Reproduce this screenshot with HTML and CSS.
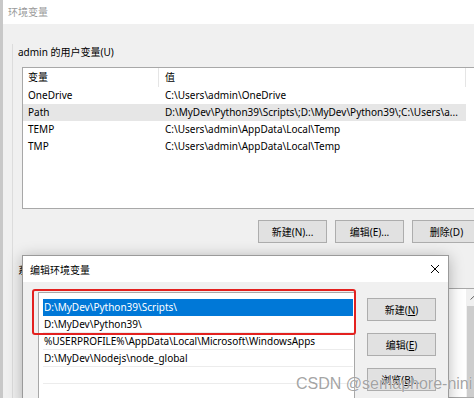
FILE: index.html
```html
<!DOCTYPE html>
<html>
  <head>
    <meta charset="utf-8">
    <title>环境变量</title>
    <link rel="stylesheet" href="styles.css">
  </head>
  <body>
    <div class="main">
      <div class="titlebar">环境变量</div>
      <div class="content">
        <div class="panel">
          <div class="label">admin 的用户变量(U)</div>

          <div class="listview">
            <div class="lv-head">
              <span class="c1">变量</span>
              <span class="c2">值</span>
            </div>
            <div class="lv-row"><span class="c1">OneDrive</span><span class="c2">C:\Users\admin\OneDrive</span></div>
            <div class="lv-row selected"><span class="c1">Path</span><span class="c2">D:\MyDev\Python39\Scripts\;D:\MyDev\Python39\;C:\Users\a...</span></div>
            <div class="lv-row"><span class="c1">TEMP</span><span class="c2">C:\Users\admin\AppData\Local\Temp</span></div>
            <div class="lv-row"><span class="c1">TMP</span><span class="c2">C:\Users\admin\AppData\Local\Temp</span></div>
          </div>

          <div class="btn-row">
            <button class="btn">新建(N)...</button>
            <button class="btn">编辑(E)...</button>
            <button class="btn">删除(D)</button>
          </div>

          <div class="label sys-label">系统变量(S)</div>
          <div class="sys-list">
            <div class="scrollbar">
              <div class="arrow">
                <svg width="9" height="5" viewBox="0 0 9 5"><path d="M0.5 4.5 L4.5 0.8 L8.5 4.5" fill="none" stroke="#606060" stroke-width="1"/></svg>
              </div>
              <div class="thumb"></div>
            </div>
          </div>
        </div>
      </div>
    </div>

    <!-- ventana de edición encima -->
    <div class="dialog">
      <div class="dlg-title">
        <span>编辑环境变量</span>
        <svg class="close" width="10" height="10" viewBox="0 0 10 10"><path d="M1 1 L9 9 M9 1 L1 9" stroke="#000" stroke-width="1"/></svg>
      </div>
      <div class="dlg-body">
        <div class="path-list">
          <div class="path-item active">D:\MyDev\Python39\Scripts\</div>
          <div class="path-item">D:\MyDev\Python39\</div>
          <div class="path-item">%USERPROFILE%\AppData\Local\Microsoft\WindowsApps</div>
          <div class="path-item">D:\MyDev\Nodejs\node_global</div>
          <div class="path-item"></div>
        </div>
        <div class="dlg-buttons">
          <button class="btn">新建(<u>N</u>)</button>
          <button class="btn">编辑(<u>E</u>)</button>
          <button class="btn">浏览(<u>B</u>)...</button>
        </div>
      </div>
      <div class="mark-box"></div>
    </div>

    <div class="watermark">CSDN @semaphore-nini</div>
  </body>
</html>
```

FILE: styles.css
```css
* {
  box-sizing: border-box;
  margin: 0;
  padding: 0;
}

body {
  width: 474px;
  height: 398px;
  overflow: hidden;
  position: relative;
  background-color: #c8c8c8;
  font-family: "Noto Sans", "Noto Sans CJK SC", sans-serif;
  font-size: 10px;
  color: #000;
}

/* Ventana principal */
.main {
  margin-left: 3px;
  height: 398px;
  overflow: hidden;
  background-color: #f0f0f0;
}

.titlebar {
  height: 24px;
  line-height: 24px;
  padding-left: 5px;
  background-color: #fff;
  color: #9a9a9a;
}

.content {
  padding-top: 20px;
  padding-left: 9px;
}

.panel {
  border-left: 1px solid #dcdcdc;
  padding-left: 5px;
  height: 354px;
}

.label {
  line-height: 16px;
  white-space: nowrap;
}

.listview {
  margin-left: 4px;
  margin-top: 7px;
  width: 470px;
  height: 142px;
  border: 1px solid #a8a8a8;
  background-color: #fff;
}

.lv-head,
.lv-row {
  display: flex;
  white-space: nowrap;
}

.lv-head {
  height: 19px;
  line-height: 19px;
}

.lv-row {
  width: 443px;
  height: 17px;
  line-height: 17px;
}

.lv-row.selected {
  background-color: #e6e6e6;
}

.c1 {
  width: 136px;
  padding-left: 5px;
  flex-shrink: 0;
}

.c2 {
  width: 307px;
  padding-left: 6px;
  padding-right: 4px;
  overflow: hidden;
  flex-shrink: 0;
}

.lv-head .c1,
.lv-head .c2 {
  border-right: 1px solid #e5e5e5;
}

.btn-row {
  display: flex;
  gap: 8px;
  margin-left: 240px;
  margin-top: 11px;
}

.btn {
  width: 69px;
  height: 23px;
  flex-shrink: 0;
  background-color: #e1e1e1;
  border: 1px solid #adadad;
  font-family: inherit;
  font-size: 10px;
  color: #000;
}

.sys-label {
  margin-top: 19px;
}

.sys-list {
  margin-left: 4px;
  margin-top: 10px;
  width: 462px;
  height: 110px;
  border: 1px solid #a8a8a8;
  background-color: #fff;
  display: flex;
  justify-content: flex-end;
}

.scrollbar {
  width: 17px;
  background-color: #f0f0f0;
  display: flex;
  flex-direction: column;
}

.arrow {
  height: 17px;
  display: flex;
  align-items: center;
  justify-content: center;
}

.thumb {
  flex: 1;
  margin: 0 1px;
  background-color: #cdcdcd;
}

/* Diálogo "编辑环境变量" */
.dialog {
  position: absolute;
  left: 22px;
  top: 255px;
  width: 427px;
  height: 150px;
  overflow: hidden;
  background-color: #f0f0f0;
  border: 1px solid #9a9a9a;
  box-shadow: 0 2px 14px rgba(0, 0, 0, 0.28);
}

.dlg-title {
  height: 26px;
  display: flex;
  align-items: center;
  justify-content: space-between;
  padding: 0 8px 0 7px;
  background-color: #fff;
}

.dlg-body {
  display: flex;
  gap: 12px;
  padding: 10px 0 0 15px;
}

.path-list {
  width: 317px;
  height: 120px;
  flex-shrink: 0;
  padding: 6px 1px 0 4px;
  border: 1px solid #a8a8a8;
  background-color: #fff;
}

.path-item {
  height: 17px;
  line-height: 16px;
  padding-left: 1px;
  border-bottom: 1px solid #ececec;
  white-space: nowrap;
  overflow: hidden;
}

.path-item.active {
  background-color: #0078d7;
  border-bottom-color: #0078d7;
  color: #fff;
}

.dlg-buttons {
  display: flex;
  flex-direction: column;
  gap: 12px;
  margin-top: 6px;
}

.mark-box {
  position: absolute;
  left: 9px;
  top: 33px;
  width: 324px;
  height: 46px;
  border: 2px solid #e3211f;
  border-radius: 3px;
}

.watermark {
  position: absolute;
  left: 296px;
  top: 375px;
  font-family: "Liberation Sans", Arial, sans-serif;
  font-size: 16px;
  line-height: 18px;
  color: rgba(140, 140, 140, 0.8);
  text-shadow: 0 0 1px #fff;
  white-space: nowrap;
}
```
